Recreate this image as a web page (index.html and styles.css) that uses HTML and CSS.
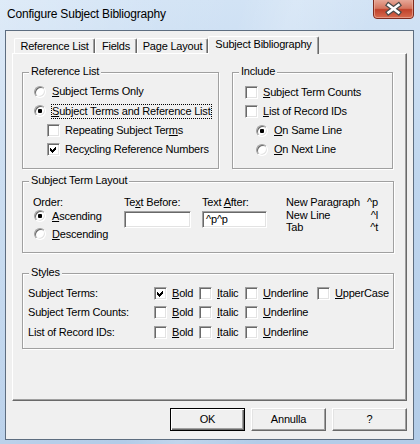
FILE: index.html
```html
<!DOCTYPE html>
<html>
<head>
<meta charset="utf-8">
<title>Configure Subject Bibliography</title>
<link rel="stylesheet" href="styles.css">
</head>
<body>
<div class="window">
  <div class="titlebar">
    <span class="title">Configure Subject Bibliography</span>
    <div class="close">
      <svg width="41" height="19" viewBox="0 0 41 19">
        <defs>
          <linearGradient id="cg" x1="0" y1="0" x2="0" y2="1">
            <stop offset="0" stop-color="#e6a797"/>
            <stop offset="0.45" stop-color="#d4755f"/>
            <stop offset="0.52" stop-color="#c0422b"/>
            <stop offset="1" stop-color="#d86d50"/>
          </linearGradient>
        </defs>
        <path d="M0.5 0 V15 Q0.5 18.5 4 18.5 H37 Q40.5 18.5 40.5 15 V0" fill="url(#cg)" stroke="#7d2b1f"/>
        <path d="M1.5 0 V15 Q1.5 17.5 4 17.5 H37 Q39.5 17.5 39.5 15 V0" fill="none" stroke="#f0b9a8" stroke-opacity="0.6"/>
        <path d="M15.5 5 L25.5 12.5 M25.5 5 L15.5 12.5" stroke="#4a4a4a" stroke-width="5" stroke-linecap="square"/>
        <path d="M15.5 5 L25.5 12.5 M25.5 5 L15.5 12.5" stroke="#ffffff" stroke-width="2.6" stroke-linecap="square"/>
      </svg>
    </div>
  </div>
  <div class="client">
    <div class="tabs">
      <div class="tab t1">Reference List</div>
      <div class="tab t2">Fields</div>
      <div class="tab t3">Page Layout</div>
      <div class="tab t4 active">Subject Bibliography</div>
    </div>
    <div class="panel">
      <div class="row1">
        <div class="group g-ref">
          <span class="legend">Reference List</span>
          <div class="opts opts-ref">
            <div class="opt"><span class="radio"></span><span class="lbl"><u>S</u>ubject Terms Only</span></div>
            <div class="opt"><span class="radio on"></span><span class="lbl focus"><u>S</u>ubject Terms and Reference List</span></div>
            <div class="opt sub-c"><span class="check"></span><span class="lbl">Repeating Subject Ter<u>m</u>s</span></div>
            <div class="opt sub-c"><span class="check on"><svg width="11" height="11" viewBox="0 0 11 11"><polygon points="2,4 4,6 8,2 8,5 4,9 2,7" fill="#000"/></svg></span><span class="lbl">Rec<u>y</u>cling Reference Numbers</span></div>
          </div>
        </div>
        <div class="group g-inc">
          <span class="legend">Include</span>
          <div class="opts opts-inc">
            <div class="opt"><span class="check"></span><span class="lbl"><u>S</u>ubject Term Counts</span></div>
            <div class="opt"><span class="check"></span><span class="lbl"><u>L</u>ist of Record IDs</span></div>
            <div class="opt sub-r"><span class="radio on"></span><span class="lbl"><u>O</u>n Same Line</span></div>
            <div class="opt sub-r"><span class="radio"></span><span class="lbl"><u>O</u>n Next Line</span></div>
          </div>
        </div>
      </div>

      <div class="group g-layout">
        <span class="legend">Subject Term Layout</span>
        <div class="layout">
          <div class="col col-order">
            <div class="caption">Order:</div>
            <div class="opt small"><span class="radio on"></span><span class="lbl"><u>A</u>scending</span></div>
            <div class="opt small desc"><span class="radio"></span><span class="lbl"><u>D</u>escending</span></div>
          </div>
          <div class="col col-before">
            <div class="caption">Te<u>x</u>t Before:</div>
            <div class="field w-before"></div>
          </div>
          <div class="col col-after">
            <div class="caption">Text <u>A</u>fter:</div>
            <div class="field w-after">^p^p</div>
          </div>
          <div class="codes">
            <span>New Paragraph</span><span class="code">^p</span>
            <span>New Line</span><span class="code">^l</span>
            <span>Tab</span><span class="code">^t</span>
          </div>
        </div>
      </div>

      <div class="group g-styles">
        <span class="legend">Styles</span>
        <div class="styles">
          <span class="rowlbl">Subject Terms:</span>
          <div class="opt"><span class="check on"><svg width="11" height="11" viewBox="0 0 11 11"><polygon points="2,4 4,6 8,2 8,5 4,9 2,7" fill="#000"/></svg></span><span class="lbl"><u>B</u>old</span></div>
          <div class="opt"><span class="check"></span><span class="lbl"><u>I</u>talic</span></div>
          <div class="opt"><span class="check"></span><span class="lbl"><u>U</u>nderline</span></div>
          <div class="opt"><span class="check"></span><span class="lbl"><u>U</u>pperCase</span></div>

          <span class="rowlbl">Subject Term Counts:</span>
          <div class="opt"><span class="check"></span><span class="lbl"><u>B</u>old</span></div>
          <div class="opt"><span class="check"></span><span class="lbl"><u>I</u>talic</span></div>
          <div class="opt"><span class="check"></span><span class="lbl"><u>U</u>nderline</span></div>
          <span></span>

          <span class="rowlbl">List of Record IDs:</span>
          <div class="opt"><span class="check"></span><span class="lbl"><u>B</u>old</span></div>
          <div class="opt"><span class="check"></span><span class="lbl"><u>I</u>talic</span></div>
          <div class="opt"><span class="check"></span><span class="lbl"><u>U</u>nderline</span></div>
          <span></span>
        </div>
      </div>
    </div>
    <div class="buttons">
      <div class="btn default">OK</div>
      <div class="btn">Annulla</div>
      <div class="btn">?</div>
    </div>
  </div>
</div>
</body>
</html>
```
FILE: styles.css
```css
* { box-sizing: border-box; }
html, body { margin: 0; padding: 0; }
body {
  width: 420px;
  height: 444px;
  overflow: hidden;
  font-family: "Liberation Sans", Arial, sans-serif;
  font-size: 11px;
  letter-spacing: -0.2px;
  color: #000;
}
u { text-decoration: underline; text-underline-offset: 1px; }

.window {
  width: 420px;
  height: 444px;
  display: flex;
  flex-direction: column;
  background:
    linear-gradient(105deg, rgba(255,255,255,0.28) 0%, rgba(255,255,255,0.05) 30%, rgba(255,255,255,0) 45%, rgba(255,255,255,0.18) 55%, rgba(255,255,255,0) 70%),
    linear-gradient(#d2e3f5, #bfd6ee 40%, #b3cce8);
}

.titlebar {
  height: 30px;
  flex: none;
  display: flex;
  justify-content: space-between;
  align-items: flex-start;
}
.title {
  font-family: "Liberation Sans", Arial, sans-serif;
  font-size: 12px;
  line-height: 16px;
  margin: 6px 0 0 7px;
}
.close {
  width: 41px;
  height: 19px;
  margin-right: 6px;
}
.close svg { display: block; }

.client {
  flex: 1;
  margin: 0 6px 4px 5px;
  border: 1px solid #5d6d80;
  background: #f0f0f0;
  padding: 5px 6px 8px 6px;
  display: flex;
  flex-direction: column;
}

/* tabs */
.tabs {
  height: 17px;
  display: flex;
  align-items: flex-end;
  padding-left: 2px;
}
.tab {
  height: 15px;
  padding-top: 1px;
  line-height: 13px;
  text-align: center;
  border-top: 1px solid #fff;
  border-left: 1px solid #fff;
  border-right: 1px solid #696969;
  box-shadow: inset -1px 0 #a0a0a0;
  border-radius: 2px 2px 0 0;
  background: #f0f0f0;
}
.t1 { width: 81px; }
.t2 { width: 42px; }
.t3 { width: 71px; }
.t4 { width: 111px; }
.tab.active {
  height: 18px;
  margin-bottom: -1px;
  padding-top: 1px;
  position: relative;
  z-index: 1;
}

/* panel */
.panel {
  width: 395px;
  height: 348px;
  flex: none;
  border-top: 1px solid #fff;
  border-left: 1px solid #fff;
  border-right: 1px solid #696969;
  border-bottom: 1px solid #696969;
  box-shadow: inset -1px -1px #a0a0a0;
  padding: 18px 0 0 9px;
}
.row1 {
  display: flex;
  gap: 13px;
}

.group {
  position: relative;
  border: 1px solid #a0a0a0;
  box-shadow: inset 1px 1px #fff, 1px 1px #fff;
}
.legend {
  position: absolute;
  top: -9px;
  left: 6px;
  padding: 0 2px;
  line-height: 14px;
  background: #f0f0f0;
}
.g-ref { width: 197px; height: 97px; }
.g-inc { width: 161px; height: 97px; }
.g-layout { width: 372px; height: 72px; margin-top: 12px; }
.g-styles { width: 372px; height: 76px; margin-top: 20px; }

.opts { display: grid; }
.opts-ref { padding: 9px 0 0 11px; grid-template-rows: 19px 20px 19px 19px; }
.opts-inc { padding: 10px 0 0 12px; grid-template-rows: 19px 19px 19px 19px; }

.opt {
  display: flex;
  align-items: center;
  white-space: nowrap;
}
.sub-c { padding-left: 13px; }
.sub-r { padding-left: 11px; }

.lbl {
  line-height: 13px;
  border: 1px solid transparent;
}
.radio + .lbl { margin-left: 5px; }
.check + .lbl { margin-left: 4px; }
.lbl.focus { border: 1px dotted #000; }

.radio {
  position: relative;
  flex: none;
  width: 12px;
  height: 12px;
  border-radius: 50%;
  border: 1px solid;
  border-color: #a0a0a0 #fff #fff #a0a0a0;
  box-shadow: inset 1px 1px #696969, inset -1px -1px #e3e3e3;
  background: #fff;
}
.radio.on::after {
  content: "";
  position: absolute;
  left: 3px;
  top: 3px;
  width: 4px;
  height: 4px;
  border-radius: 1px;
  background: #000;
}

.check {
  flex: none;
  width: 13px;
  height: 13px;
  border: 1px solid;
  border-color: #a0a0a0 #fff #fff #a0a0a0;
  box-shadow: inset 1px 1px #696969, inset -1px -1px #e3e3e3;
  background: #fff;
}
.check svg { display: block; shape-rendering: crispEdges; }

/* subject term layout */
.layout {
  display: flex;
  padding: 13px 0 0 10px;
}
.col { display: flex; flex-direction: column; }
.col-order { width: 91px; }
.col-before { width: 78px; }
.col-after { width: 84px; }
.caption { line-height: 14px; white-space: nowrap; }
.opt.small { height: 14px; padding-left: 1px; }
.opt.desc { margin-top: 4px; }
.field {
  height: 17px;
  margin-top: 2px;
  background: #fff;
  border: 1px solid;
  border-color: #a0a0a0 #fff #fff #a0a0a0;
  box-shadow: inset 1px 1px #696969, inset -1px -1px #e3e3e3;
  padding: 0 0 0 3px;
  line-height: 14px;
}
.w-before { width: 67px; }
.w-after { width: 65px; }
.codes {
  width: 92px;
  padding-top: 1px;
  display: grid;
  grid-template-columns: 1fr auto;
  grid-auto-rows: 12.5px;
  line-height: 12.5px;
  white-space: nowrap;
}
.code { text-align: right; }

/* styles */
.styles {
  display: grid;
  padding: 9px 0 0 5px;
  grid-template-columns: 126px 45px 46px 72px auto;
  grid-template-rows: 20px 19px 20px;
  align-items: center;
}
.rowlbl { line-height: 13px; white-space: nowrap; }

/* buttons */
.buttons {
  width: 395px;
  margin-top: 7px;
  display: flex;
  justify-content: flex-end;
  gap: 6px;
}
.btn {
  width: 75px;
  height: 23px;
  line-height: 21px;
  text-align: center;
  background: #f0f0f0;
  border: 1px solid;
  border-color: #fff #696969 #696969 #fff;
  box-shadow: inset -1px -1px #a0a0a0, inset 1px 1px #e3e3e3;
}
.btn.default {
  border: 1px solid #000;
  box-shadow: inset 1px 1px #fff, inset -1px -1px #696969, inset -2px -2px #a0a0a0;
}
```
